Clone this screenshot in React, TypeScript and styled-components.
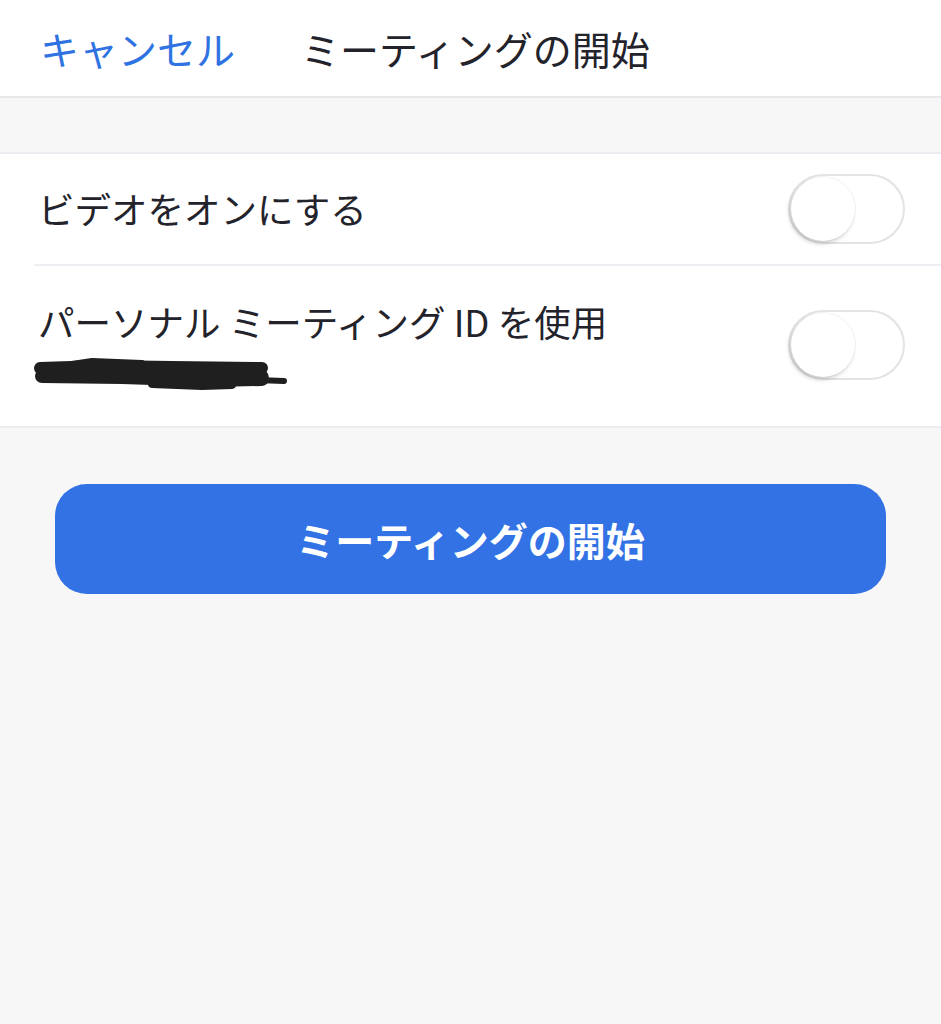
import React from "react";
import styled, { createGlobalStyle } from "styled-components";

const GlobalStyle = createGlobalStyle`
  html, body {
    margin: 0;
    padding: 0;
    background: #f7f7f7;
  }
  body {
    font-family: "Noto Sans CJK JP", "Noto Sans", sans-serif;
    color: #23232b;
  }
`;

const Page = styled.div`
  min-height: 100vh;
  background: #f7f7f7;
  display: flex;
  flex-direction: column;
`;

const Header = styled.header`
  height: 96px;
  background: #ffffff;
  border-bottom: 2px solid #e8e8eb;
  display: flex;
  align-items: center;
  padding: 0 40px;
  gap: 66px;
`;

const HeaderText = styled.span<{ $link?: boolean }>`
  font-size: 39px;
  line-height: 1;
  color: ${(props) => (props.$link ? "#2f72e2" : "#23232b")};
  cursor: ${(props) => (props.$link ? "pointer" : "default")};
`;

const Section = styled.section`
  margin-top: 54px;
  background: #ffffff;
  border-top: 2px solid #ececf0;
  border-bottom: 2px solid #ececf0;
`;

const Row = styled.div<{ $tall?: boolean }>`
  height: ${(props) => (props.$tall ? "160px" : "110px")};
  display: flex;
  align-items: ${(props) => (props.$tall ? "flex-start" : "center")};
  justify-content: space-between;
  padding: ${(props) => (props.$tall ? "34px 36px 0 38px" : "0 36px 0 38px")};
  box-sizing: border-box;
`;

const Divider = styled.div`
  height: 2px;
  margin-left: 34px;
  background: #efeff3;
`;

const LabelBlock = styled.div`
  display: flex;
  flex-direction: column;
  gap: 8px;
`;

const Label = styled.span`
  font-size: 36.5px;
  line-height: 44px;
  color: #23232b;
`;

const Redacted = styled.svg`
  display: block;
  margin-left: -6px;
`;

const Switch = styled.div<{ $tall?: boolean }>`
  width: 117px;
  height: 70px;
  box-sizing: border-box;
  border: 2px solid #e3e3e3;
  border-radius: 35px;
  background: #ffffff;
  display: flex;
  align-items: center;
  padding: 0 1px;
  margin-top: ${(props) => (props.$tall ? "10px" : "0")};
  flex-shrink: 0;
`;

const Knob = styled.div`
  width: 64px;
  height: 64px;
  border-radius: 50%;
  background: #ffffff;
  box-shadow: -2px 3px 4px rgba(0, 0, 0, 0.16), 0 0 0 1px rgba(0, 0, 0, 0.05);
`;

const StartButton = styled.button`
  margin: 56px 55px 0;
  height: 110px;
  border: none;
  border-radius: 32px;
  background: #3272e4;
  color: #ffffff;
  font-family: "Noto Sans CJK JP", "Noto Sans", sans-serif;
  font-size: 39px;
  font-weight: 700;
  cursor: pointer;
`;

const Toggle: React.FC<{ $tall?: boolean }> = ({ $tall }) => (
  <Switch $tall={$tall}>
    <Knob />
  </Switch>
);

const App: React.FC = () => {
  return (
    <Page>
      <GlobalStyle />
      <Header>
        <HeaderText $link>キャンセル</HeaderText>
        <HeaderText>ミーティングの開始</HeaderText>
      </Header>
      <Section>
        <Row>
          <Label>ビデオをオンにする</Label>
          <Toggle />
        </Row>
        <Divider />
        <Row $tall>
          <LabelBlock>
            <Label>パーソナル ミーティング ID を使用</Label>
            <Redacted width="260" height="42" viewBox="0 0 260 42">
              <g fill="none" stroke="#1f1f1f" strokeLinecap="round" strokeLinejoin="round">
                <path d="M8 16 L70 14 L140 15 L230 16" strokeWidth="12" />
                <path d="M10 24 L90 25 L180 28 L230 27" strokeWidth="14" />
                <path d="M40 12 L60 9 L110 11" strokeWidth="6" />
                <path d="M120 32 L170 34 L200 33" strokeWidth="8" />
                <path d="M225 28 L252 29" strokeWidth="6" />
                <path d="M228 18 L232 24" strokeWidth="9" />
              </g>
            </Redacted>
          </LabelBlock>
          <Toggle $tall />
        </Row>
      </Section>
      <StartButton>ミーティングの開始</StartButton>
    </Page>
  );
};

export default App;
